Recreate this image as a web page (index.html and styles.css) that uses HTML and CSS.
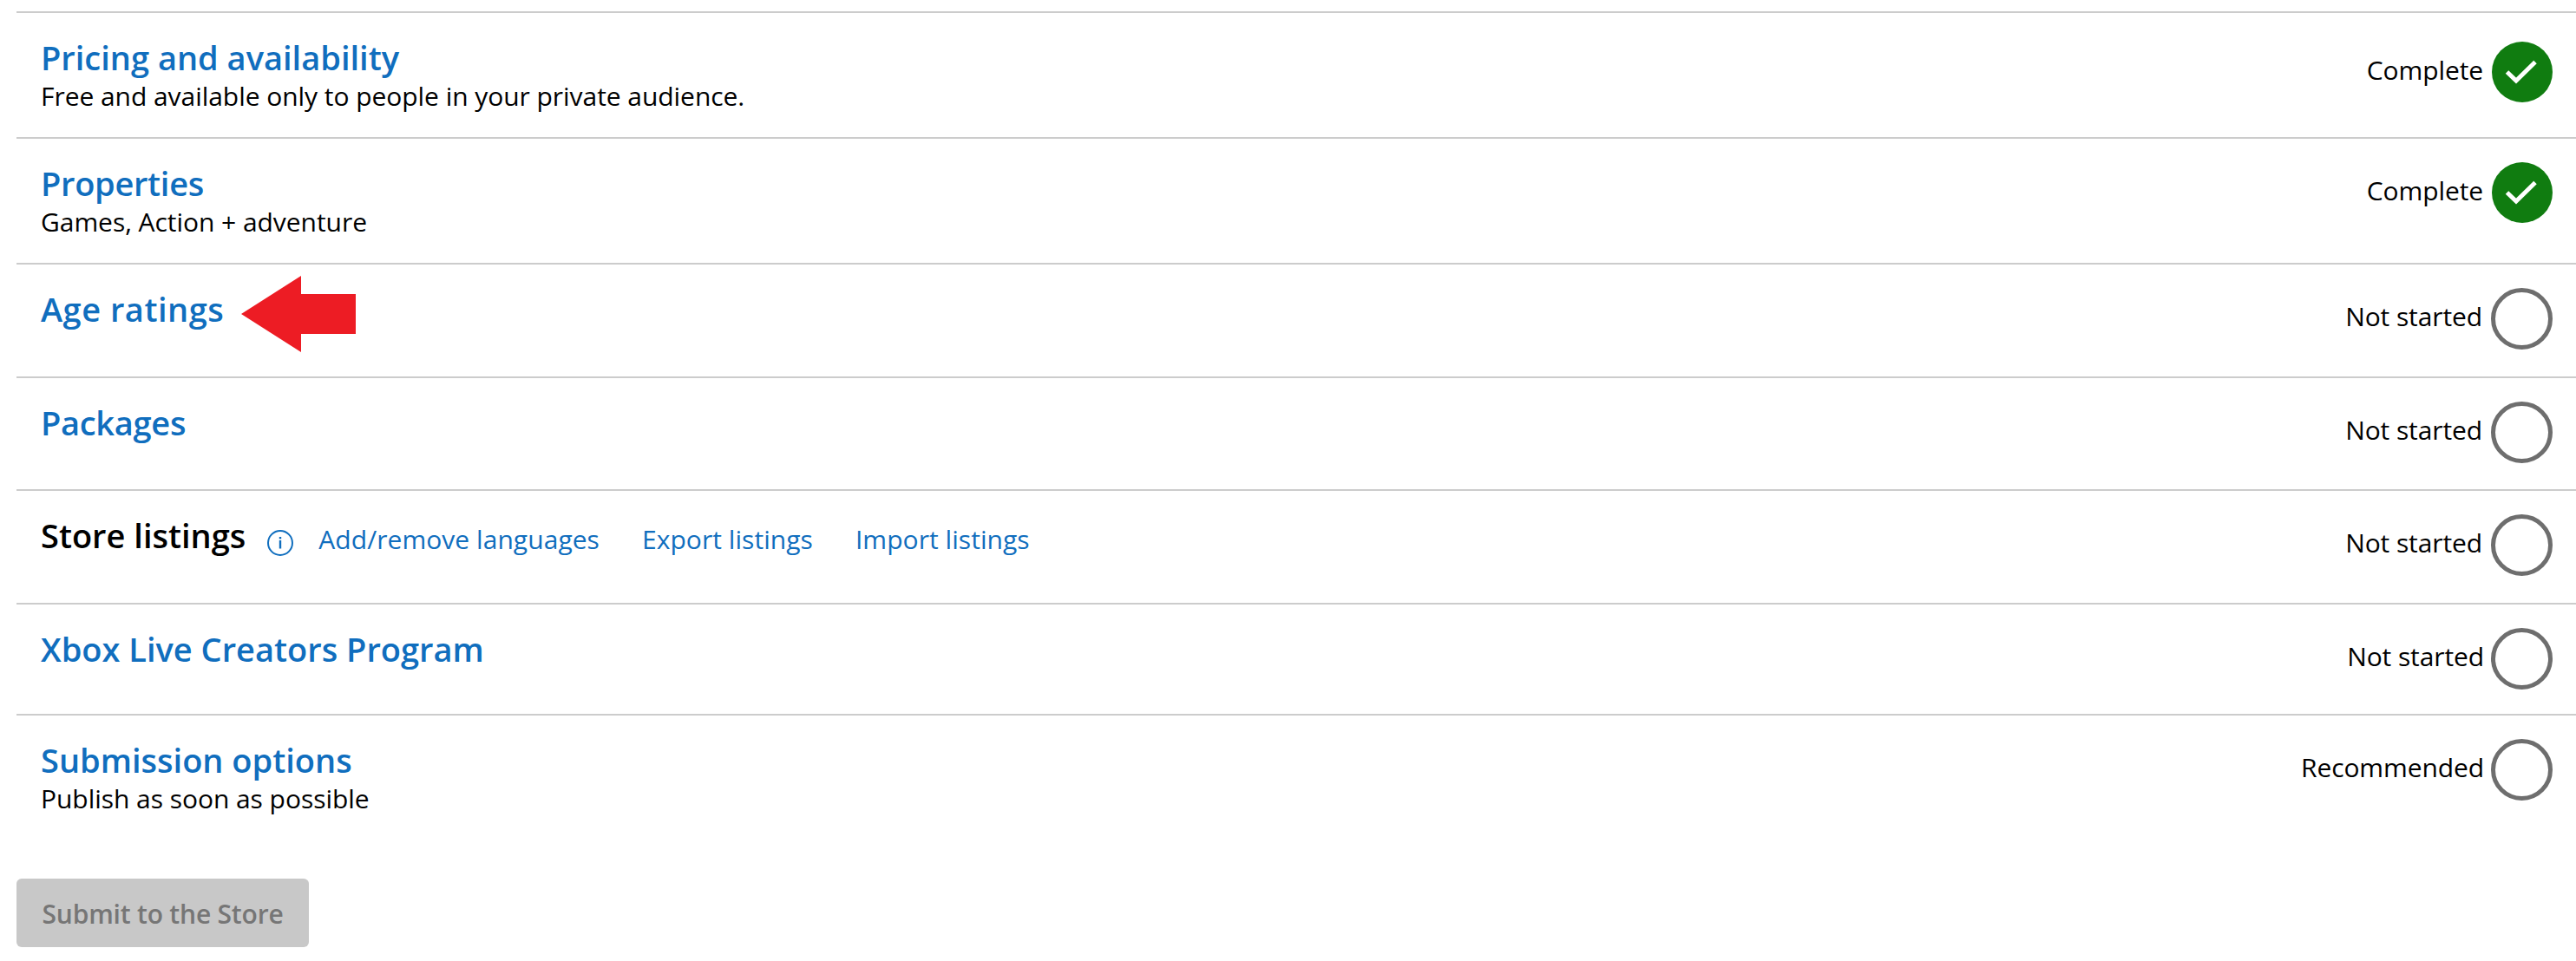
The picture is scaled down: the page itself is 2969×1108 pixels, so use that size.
FILE: index.html
```html
<!DOCTYPE html>
<html lang="en">
<head>
<meta charset="utf-8">
<title>Submission</title>
<link rel="stylesheet" href="styles.css">
</head>
<body>
<main class="page">
  <section class="list">
    <div class="row row--145">
      <div class="info"><a class="title" href="#">Pricing and availability</a><p class="desc">Free and available only to people in your private audience.</p></div>
      <div class="status status--first"><span class="status-text">Complete</span><svg class="badge" viewBox="0 0 70 70"><circle cx="35" cy="35" r="35" fill="#107c10"/><path d="M17.5 35 28 45 50 23.5" fill="none" stroke="#fff" stroke-width="5"/></svg></div>
    </div>
    <div class="row row--145">
      <div class="info"><a class="title title--tight" href="#">Properties</a><p class="desc">Games, Action + adventure</p></div>
      <div class="status"><span class="status-text">Complete</span><svg class="badge" viewBox="0 0 70 70"><circle cx="35" cy="35" r="35" fill="#107c10"/><path d="M17.5 35 28 45 50 23.5" fill="none" stroke="#fff" stroke-width="5"/></svg></div>
    </div>
    <div class="row row--131 row--arrow">
      <div class="info"><a class="title title--wide" href="#">Age ratings</a></div>
      <svg class="arrow" viewBox="0 0 132 88"><path d="M0 44 69 0V21H132V67H69V88Z" fill="#ed1c24"/></svg>
      <div class="status"><span class="status-text">Not started</span><span class="ring"></span></div>
    </div>
    <div class="row row--130">
      <div class="info"><a class="title title--tight" href="#">Packages</a></div>
      <div class="status"><span class="status-text">Not started</span><span class="ring"></span></div>
    </div>
    <div class="row row--131">
      <div class="info info--inline">
        <span class="title title--plain">Store listings</span>
        <svg class="info-icon" viewBox="0 0 30 30"><circle cx="15" cy="15" r="14" fill="none" stroke="#106ebe" stroke-width="2"/><rect x="13.8" y="12" width="2.4" height="9.5" fill="#106ebe"/><rect x="13.8" y="8" width="2.4" height="2.4" fill="#106ebe"/></svg>
        <a class="link link--add" href="#">Add/remove languages</a>
        <a class="link" href="#">Export listings</a>
        <a class="link" href="#">Import listings</a>
      </div>
      <div class="status"><span class="status-text">Not started</span><span class="ring"></span></div>
    </div>
    <div class="row row--128">
      <div class="info"><a class="title" href="#">Xbox Live Creators Program</a></div>
      <div class="status status--wide"><span class="status-text">Not started</span><span class="ring"></span></div>
    </div>
    <div class="row row--last">
      <div class="info"><a class="title" href="#">Submission options</a><p class="desc">Publish as soon as possible</p></div>
      <div class="status status--wide"><span class="status-text">Recommended</span><span class="ring"></span></div>
    </div>
  </section>
  <button class="submit" disabled>Submit to the Store</button>
</main>
</body>
</html>
```
FILE: styles.css
```css
* { box-sizing: border-box; }
html, body { margin: 0; background: #fff; }
body { font-family: "Open Sans", "Noto Sans", sans-serif; color: #000; }
.page { padding: 13px 0 0 19px; }
.row {
  position: relative;
  display: flex;
  justify-content: space-between;
  align-items: flex-start;
  border-top: 2px solid #ccc;
  padding: 27px 27px 0 28px;
}
.row--145 { height: 145px; }
.row--131 { height: 131px; }
.row--130 { height: 130px; }
.row--128 { height: 128px; }
.row--last { height: 190px; }
.title {
  display: block;
  font-size: 38px;
  line-height: 48px;
  font-weight: 600;
  color: #106ebe;
  text-decoration: none;
  white-space: nowrap;
}
.title--plain { color: #000; }
.title--wide { letter-spacing: 0.5px; }
.title--tight { letter-spacing: -0.3px; }
.desc {
  margin: 0;
  font-size: 30px;
  line-height: 42px;
  letter-spacing: -0.05px;
  white-space: nowrap;
}
.info--inline { display: flex; align-items: center; height: 48px; }
.info-icon { width: 30px; height: 30px; margin: 18px 29px 0 25px; flex: none; }
.link {
  font-size: 30px;
  line-height: 42px;
  letter-spacing: 0.05px;
  margin-top: 10px;
  margin-right: 49px;
  color: #106ebe;
  text-decoration: none;
  white-space: nowrap;
}
.status { display: flex; align-items: flex-start; gap: 10px; }
.status--first { margin-top: 6px; }
.status-text { font-size: 30px; line-height: 42px; letter-spacing: -0.1px; padding-top: 12px; white-space: nowrap; }
.status--wide { gap: 8px; }
.badge { width: 70px; height: 70px; flex: none; }
.ring { width: 71px; height: 71px; border: 5px solid #6e6e6e; border-radius: 50%; flex: none; }
.arrow { position: absolute; left: 259px; top: 13px; width: 132px; height: 88px; }
.submit {
  display: block;
  width: 337px;
  height: 79px;
  border: 0;
  border-radius: 6px;
  background: #c8c8c8;
  color: #767676;
  font: 600 30px "Open Sans", sans-serif;
  letter-spacing: -0.2px;
  padding: 2px 0 0;
}
```
